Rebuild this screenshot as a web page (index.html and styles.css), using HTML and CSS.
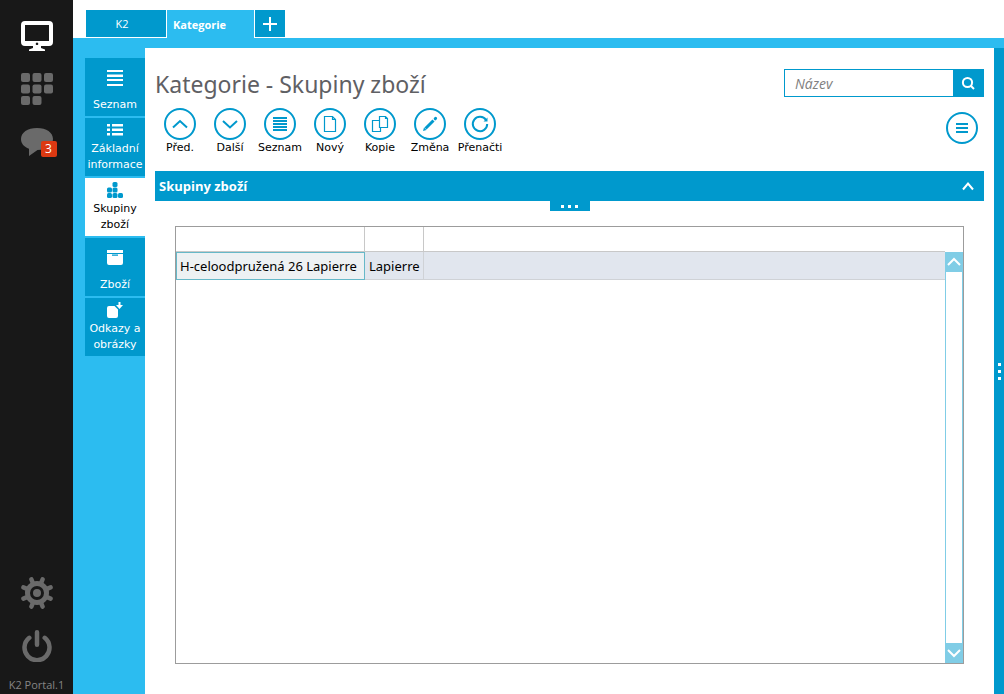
FILE: index.html
```html
<!DOCTYPE html>
<html lang="cs">
<head>
<meta charset="utf-8">
<title>Kategorie - Skupiny zboží</title>
<link rel="stylesheet" href="styles.css">
</head>
<body>
<div class="app">
  <aside class="rail">
    <div class="rail-group">
      <button class="rail-btn active" aria-label="Plocha">
        <svg width="32" height="32" viewBox="0 0 32 32"><path fill="currentColor" fill-rule="evenodd" d="M4 1h24a4 4 0 0 1 4 4v17a4 4 0 0 1-4 4h-8v2l4 1.500v1.500H8v-1.500l4-1.500v-2H4a4 4 0 0 1-4-4V5a4 4 0 0 1 4-4zM4 5v16h24V5zM16 22.500a1.300 1.300 0 1 0 .01 0z"/></svg>
      </button>
      <button class="rail-btn" aria-label="Moduly">
        <svg width="32" height="32" viewBox="0 0 32 32" fill="currentColor"><rect x="0" y="0" width="9" height="9" rx="2"/><rect x="11.500" y="0" width="9" height="9" rx="2"/><rect x="23" y="0" width="9" height="9" rx="2"/><rect x="0" y="11.500" width="9" height="9" rx="2"/><rect x="11.500" y="11.500" width="9" height="9" rx="2"/><rect x="23" y="11.500" width="9" height="9" rx="2"/><rect x="0" y="23" width="9" height="9" rx="2"/><rect x="11.500" y="23" width="9" height="9" rx="2"/></svg>
      </button>
      <button class="rail-btn" aria-label="Zprávy">
        <svg width="32" height="32" viewBox="0 0 32 32"><path fill="currentColor" d="M16 2c9.500 0 16 4.500 16 11s-6.500 11-15.500 11L8 30v-7.300C3 21 0 17.500 0 13 0 6.500 6.500 2 16 2z"/></svg>
        <span class="badge">3</span>
      </button>
    </div>
    <div class="rail-group rail-bottom">
      <button class="rail-btn" aria-label="Nastavení">
        <svg width="32" height="32" viewBox="-16 -16 32 32" fill="none" stroke="currentColor"><circle r="9.500" stroke-width="5"/><circle r="4" fill="currentColor" stroke="none"/><path stroke-width="4.400" stroke-linecap="round" d="M4.400-10.600 5.600-13.600M10.600-4.400 13.600-5.600M10.600 4.400 13.600 5.600M4.400 10.600 5.600 13.600M-4.400 10.600-5.600 13.600M-10.600 4.400-13.600 5.600M-10.600-4.400-13.600-5.600M-4.400-10.600-5.600-13.600"/></svg>
      </button>
      <button class="rail-btn" aria-label="Odhlásit">
        <svg width="32" height="32" viewBox="0 0 32 32" fill="none" stroke="currentColor" stroke-width="4.500" stroke-linecap="round"><path d="M16 2.300v12.500M8.300 7.800a12.500 12.500 0 1 0 15.400 0"/></svg>
      </button>
      <span class="version">K2 Portal.1</span>
    </div>
  </aside>

  <div class="workspace">
    <nav class="tabs">
      <button class="tab">K2</button>
      <button class="tab current">Kategorie</button>
      <button class="tab add" aria-label="Nová záložka"><svg width="14" height="14" viewBox="0 0 14 14"><path d="M7 0v14M0 7h14" stroke="#fff" stroke-width="2"/></svg></button>
    </nav>
    <div class="body">
      <nav class="sidenav">
        <button class="side tall">
          <svg width="16" height="16" viewBox="0 0 16 16" fill="#fff"><path d="M0 0h16v2H0zM0 4.500h16v2.500H0zM0 9h16v2H0zM0 14h16v2H0z"/></svg>
          <span>Seznam</span>
        </button>
        <button class="side">
          <svg width="16" height="16" viewBox="0 0 16 16" fill="#fff"><path d="M0 2h3v2.500H0zM5 2h11v2.500H5zM0 6.500h3V9H0zM5 6.500h11V9H5zM0 11h3v2.500H0zM5 11h11v2.500H5z"/></svg>
          <span>Základní informace</span>
        </button>
        <button class="side selected">
          <svg width="16" height="16" viewBox="0 0 16 16" fill="#0099cd"><rect x="5.500" width="5" height="5" rx="1.500"/><rect y="5.500" width="5" height="5" rx="1.500"/><rect x="5.500" y="5.500" width="5" height="5" rx="1.500"/><rect y="11" width="5" height="5" rx="1.500"/><rect x="5.500" y="11" width="5" height="5" rx="1.500"/><rect x="11" y="11" width="5" height="5" rx="1.500"/></svg>
          <span>Skupiny zboží</span>
        </button>
        <button class="side tall">
          <svg width="16" height="16" viewBox="0 0 16 16" fill="#fff"><path d="M0 0h16v3H0zM0 4h16v9a2 2 0 0 1-2 2H2a2 2 0 0 1-2-2zM5 4.500v1.300h6V4.500z" fill-rule="evenodd"/></svg>
          <span>Zboží</span>
        </button>
        <button class="side">
          <svg width="16" height="16" viewBox="0 0 16 16" fill="#fff"><path d="M2 4h5.500L11 7.500V14a2 2 0 0 1-2 2H2a2 2 0 0 1-2-2V6a2 2 0 0 1 2-2zM11.500 0h2v3H16l-3.500 4L9 3h2.500z"/></svg>
          <span>Odkazy a obrázky</span>
        </button>
      </nav>

      <main class="content">
        <header class="head">
          <h1>Kategorie - Skupiny zboží</h1>
          <form class="search">
            <input type="text" placeholder="Název" aria-label="Název">
            <button type="button" aria-label="Hledat"><svg width="14" height="14" viewBox="0 0 14 14" fill="none" stroke="#fff" stroke-width="2"><circle cx="6.500" cy="6.500" r="4.600"/><path d="M9.500 9.500 13 13"/></svg></button>
          </form>
        </header>

        <div class="toolbar">
          <div class="tools">
            <button class="tool"><span class="ring"><svg width="20" height="20" viewBox="0 0 20 20"><path d="m3 13.500 7-6.500 7 6.500"/></svg></span>Před.</button>
            <button class="tool"><span class="ring"><svg width="20" height="20" viewBox="0 0 20 20"><path d="m3 7 7 6.500L17 7"/></svg></span>Další</button>
            <button class="tool"><span class="ring"><svg width="20" height="20" viewBox="0 0 20 20"><path d="M3 4h14M3 7h14M3 10h14M3 13h14M3 16h14" stroke-width="1.800"/></svg></span>Seznam</button>
            <button class="tool"><span class="ring"><svg width="20" height="20" viewBox="0 0 20 20"><path d="M4.500 2.500h8l3 3v12h-11zM12.500 2.500v3h3" stroke-width="1.200"/></svg></span>Nový</button>
            <button class="tool"><span class="ring"><svg width="20" height="20" viewBox="0 0 20 20"><path d="M9.500 2.500h6l2 2v9h-8zM15.500 2.500v2h2M9.500 6.500h-7v11h8v-4" stroke-width="1.200"/></svg></span>Kopie</button>
            <button class="tool"><span class="ring"><svg width="20" height="20" viewBox="0 0 20 20"><path d="M5.500 14.500 13.500 6.500" stroke-width="3"/><path d="m15.200 4.800.4-.4" stroke-width="3" stroke-linecap="round"/><path d="m3 17 1-3.500L6.500 16z" fill="#0099cd" stroke="none"/></svg></span>Změna</button>
            <button class="tool"><span class="ring"><svg width="20" height="20" viewBox="0 0 20 20"><path d="M16 6a7.200 7.200 0 1 0 1.200 4"/><path d="M17.500 3.500v4h-4z" fill="#0099cd" stroke="none"/></svg></span>Přenačti</button>
          </div>
          <button class="ring menu" aria-label="Nabídka"><svg width="20" height="20" viewBox="0 0 20 20"><path d="M4 6h12M4 10h12M4 14h12" stroke-width="2"/></svg></button>
        </div>

        <section class="panel">
          <button class="panel-head"><span>Skupiny zboží</span><svg width="12" height="10" viewBox="0 0 12 10" fill="none" stroke="#fff" stroke-width="2"><path d="m1 8.500 5-6 5 6"/></svg></button>
          <div class="handle"><i></i><i></i><i></i></div>
          <div class="grid">
            <table>
              <colgroup><col class="col-name"><col class="col-brand"><col></colgroup>
              <thead><tr><th></th><th></th><th></th></tr></thead>
              <tbody><tr><td class="focus">H-celoodpružená 26 Lapierre</td><td>Lapierre</td><td></td></tr></tbody>
            </table>
            <div class="scroll">
              <button aria-label="Nahoru"><svg width="14" height="10" viewBox="0 0 14 10"><path d="m1 8 6-6 6 6"/></svg></button>
              <button aria-label="Dolů"><svg width="14" height="10" viewBox="0 0 14 10"><path d="m1 2 6 6 6-6"/></svg></button>
            </div>
          </div>
        </section>
      </main>
      <div class="splitter"><i></i><i></i><i></i></div>
    </div>
  </div>
</div>
</body>
</html>
```
FILE: styles.css
```css
* { box-sizing: border-box; }
body { margin: 0; font-family: "DejaVu Sans", sans-serif; font-size: 11px; color: #000; background: #fff; }
button { margin: 0; padding: 0; border: 0; background: none; font: inherit; color: inherit; cursor: pointer; }
svg { display: block; flex: none; }

.app { display: flex; min-height: 100vh; }

.rail { display: flex; flex-direction: column; justify-content: space-between; width: 73px; flex: none; padding: 20px 0 0; background: #181818; }
.rail-group { display: flex; flex-direction: column; align-items: center; gap: 21px; }
.rail-btn { position: relative; color: #6a6a6a; }
.rail-btn.active { color: #fff; }
.badge { position: absolute; left: 20px; top: 15px; width: 16px; height: 16px; border-radius: 2px; background: #dc3912; color: #fff; font: 12px/16px "Open Sans", sans-serif; text-align: center; }
.version { margin-top: -7px; color: #858585; font: 11px/18px "Open Sans", sans-serif; }

.workspace { display: flex; flex-direction: column; flex: 1; min-width: 0; }
.tabs { display: flex; gap: 1px; height: 38px; padding: 10px 13px 0; }
.tab { width: 80px; height: 27px; padding-right: 8px; background: #0099cd; color: #fff; font: 11px "Open Sans", sans-serif; }
.tab.current { width: 87px; height: 28px; padding: 0 0 0 6px; background: #2cbcf0; text-align: left; font-weight: 700; }
.tab.add { display: flex; align-items: center; justify-content: center; width: 30px; padding: 0; }

.body { display: flex; flex: 1; border-top: 10px solid #2cbcf0; }
.sidenav { display: flex; flex-direction: column; gap: 2px; width: 72px; flex: none; padding: 10px 0 0 12px; background: #2cbcf0; }
.side { display: flex; flex-direction: column; align-items: center; gap: 3px; height: 58px; padding: 4px 0 0; background: #0099cd; color: #fff; line-height: 16px; }
.side.tall { gap: 11px; padding-top: 12px; }
.side.selected { background: #fff; color: #000; }

.content { display: flex; flex-direction: column; flex: 1; min-width: 0; padding: 20px 10px 30px; }
.head { display: flex; justify-content: space-between; align-items: flex-start; height: 40px; }
h1 { margin: 0; color: #5f6064; font: 400 23px/32px "Noto Sans", sans-serif; }
.search { display: flex; width: 200px; height: 28px; margin-top: 1px; border: 1px solid #0099cd; }
.search input { flex: 1; min-width: 0; padding: 0 10px; border: 0; outline: 0; font: italic 14px "Open Sans", sans-serif; }
.search input::placeholder { color: #808080; opacity: 1; }
.search button { display: flex; align-items: center; justify-content: center; width: 30px; background: #0099cd; }

.toolbar { display: flex; justify-content: space-between; height: 63px; }
.tools { display: flex; }
.tool { display: flex; flex-direction: column; align-items: center; width: 50px; line-height: 16px; white-space: nowrap; }
.ring { display: flex; align-items: center; justify-content: center; flex: none; width: 32px; height: 32px; border: 2px solid #0099cd; border-radius: 50%; }
.ring svg { fill: none; stroke: #0099cd; stroke-width: 2; }
.menu { margin: 4px 6px 0; }

.panel { display: flex; flex-direction: column; flex: 1; }
.panel-head { display: flex; align-items: center; justify-content: space-between; height: 30px; padding: 0 10px 0 4px; background: #0099cd; color: #fff; font: 700 13px "Open Sans", sans-serif; }
.handle { display: flex; align-self: center; justify-content: center; align-items: center; gap: 4px; width: 40px; height: 10px; background: #0099cd; }
.handle i, .splitter i { width: 3px; height: 3px; background: #fff; }
.grid { display: flex; align-items: flex-start; flex: 1; margin: 15px 20px 0; border: 1px solid #9c9c9c; }
table { flex: 1; width: 100%; min-width: 0; table-layout: fixed; border-collapse: separate; border-spacing: 0; }
.col-name { width: 189px; }
.col-brand { width: 59px; }
th { height: 25px; padding: 0; border-right: 1px solid #c8c8c8; border-bottom: 1px solid #c8c8c8; }
td { height: 28px; padding: 0 4px; border-right: 1px solid #cfd2d6; border-bottom: 1px solid #cfd2d6; background: #e1e6ee; font: 13px/18px "Noto Sans", sans-serif; white-space: nowrap; }
th:last-child, td:last-child { border-right: 0; }
td.focus { padding: 0 3px; border: 1px solid #66b8c8; background: #edf1f3; }
.scroll { display: flex; flex-direction: column; justify-content: space-between; align-self: stretch; flex: none; width: 18px; margin-top: 25px; border: solid #80cde6; border-width: 0 1px; }
.scroll button { display: flex; align-items: center; justify-content: center; height: 20px; background: #80cde6; }
.scroll svg { fill: none; stroke: #fff; stroke-width: 2; }

.splitter { display: flex; flex-direction: column; align-items: center; justify-content: center; gap: 4px; width: 10px; flex: none; background: #0099cd; }
```
